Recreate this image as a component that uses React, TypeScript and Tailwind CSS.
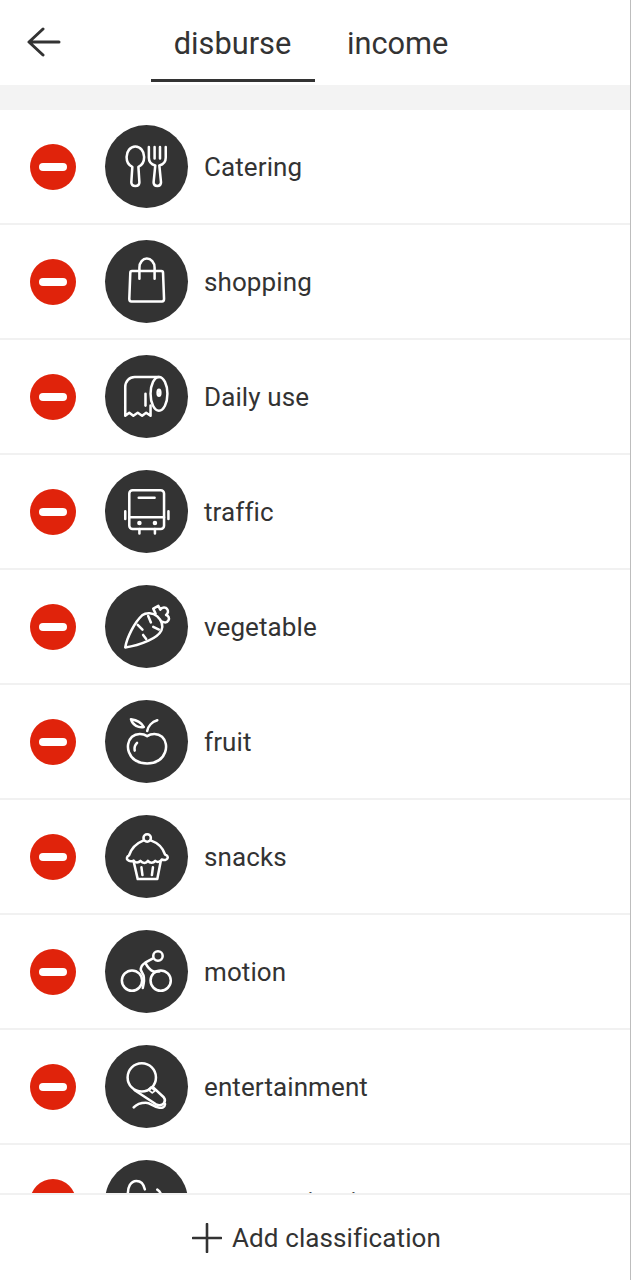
import React from "react";

const font = "font-['Roboto',sans-serif]";

const IconSvg = ({ children }: { children: React.ReactNode }) => (
  <svg
    viewBox="0 0 246 246"
    className="w-full h-full"
    fill="none"
    stroke="white"
    strokeWidth="7.5"
    strokeLinecap="round"
    strokeLinejoin="round"
  >
    {children}
  </svg>
);

const icons: Record<string, React.ReactNode> = {
  catering: (
    <>
      <path d="M90 64c-15 0-26 14-26 31 0 14 7 25 17 29l-3 46c0 7 5 11 12 11s12-4 12-11l-3-46c10-4 17-15 17-29 0-17-11-31-26-31z" />
      <path d="M130 65v32c0 12 8 20 19 23l-5 50c0 7 4 11 11 11s11-4 11-11l-5-50c11-3 19-11 19-23V65M147 65v34M163 65v34" />
    </>
  ),
  shopping: (
    <>
      <path d="M80 92h87c3 0 5 2 5 5l3 78c0 4-2 7-6 7H78c-4 0-6-3-6-7l3-78c0-3 2-5 5-5z" />
      <path d="M102 115V82c0-16 10-27 22-27s23 11 23 27v33" />
    </>
  ),
  daily: (
    <>
      <path d="M160 65H88c-16 0-28 13-28 30v85l12-9 12 9 13-9 13 9 12-9 13 9V150" />
      <ellipse cx="160" cy="115" rx="25" ry="50" />
      <ellipse cx="160" cy="112" rx="4" ry="9" />
      <path d="M120 115v35" />
    </>
  ),
  traffic: (
    <>
      <rect x="72" y="60" width="103" height="115" rx="10" />
      <path d="M100 82h47M72 140h103M60 122v23M188 122v23M102 175v13M148 175v13" />
      <circle cx="102" cy="157" r="3" fill="white" />
      <circle cx="148" cy="157" r="3" fill="white" />
    </>
  ),
  vegetable: (
    <>
      <path d="M60 185c5-30 28-75 50-95 13-10 32-8 45 3 13 12 18 28 12 42-6 12-20 22-38 30-20 9-45 17-69 20z" />
      <path d="M128 92l8 19M97 118l14 14M160 132l-17-8M122 160l-9-12" />
      <path d="M150 85l-7-15 15-8 6 11c5-8 16-8 20-2 5 6 3 13-3 18 7 2 11 9 7 16-3 5-9 7-14 5l-7-2" />
    </>
  ),
  fruit: (
    <>
      <path d="M125 107c-12-8-32-9-45 2-12 11-15 30-9 46 7 19 25 33 54 33 28 0 46-14 53-33 6-16 3-35-9-46-13-11-32-10-44-2z" />
      <path d="M88 150c-2-10 2-18 7-23" />
      <path d="M77 57c14 2 30 8 38 23-15 3-33-4-38-23z" />
      <path d="M125 92c2-14 14-27 30-32" />
    </>
  ),
  snacks: (
    <>
      <circle cx="125" cy="68" r="11" />
      <path d="M113 76c-20 8-36 26-42 44-6 3-8 9-4 13 4 4 12 5 18 2 5 8 15 7 20 1 7 8 17 8 22 0 6 7 16 7 22 0 6 5 15 4 19-4 7 3 15 1 17-3 3-5-1-10-7-12-6-18-21-34-41-41" />
      <path d="M85 138l12 52h58l10-52M108 155l3 23M142 155l-3 23" />
    </>
  ),
  motion: (
    <>
      <circle cx="80" cy="150" r="30" />
      <circle cx="165" cy="150" r="30" />
      <circle cx="157" cy="77" r="14" />
      <path d="M141 85l-22 12c-8 5-13 13-13 21l8 16c3 10 2 22-2 38" />
      <path d="M120 98c6 12 14 21 24 25h17" />
    </>
  ),
  entertainment: (
    <>
      <circle cx="109" cy="96" r="42" />
      <path d="M88 134l62 41c10 5 20 3 25-3 4-6 3-12-1-17l-32-30" />
      <path d="M128 132l8-7 12 11-8 6z" strokeWidth="5" />
      <path d="M85 185c8-9 20-14 36-14 14 0 22 13 40 15 8 1 16-1 17-11" />
    </>
  ),
  communication: (
    <>
      <path d="M68 104c-2-22 8-42 25-42 13 0 22 10 25 25" />
      <path d="M155 88c5 3 9 7 11 14" />
    </>
  ),
};

const rows = [
  { name: "Catering", icon: "catering" },
  { name: "shopping", icon: "shopping" },
  { name: "Daily use", icon: "daily" },
  { name: "traffic", icon: "traffic" },
  { name: "vegetable", icon: "vegetable" },
  { name: "fruit", icon: "fruit" },
  { name: "snacks", icon: "snacks" },
  { name: "motion", icon: "motion" },
  { name: "entertainment", icon: "entertainment" },
  { name: "communication", icon: "communication" },
];

const Row = ({ name, icon }: { name: string; icon: string }) => (
  <div className="flex items-center h-[115px] shrink-0 border-b-2 border-[#f1f1f1] pl-[30px]">
    <div className="w-[46px] h-[46px] rounded-full bg-[#e0230b] flex items-center justify-center">
      <div className="w-[28px] h-[8px] rounded-full bg-white" />
    </div>
    <div className="w-[83px] h-[83px] rounded-full bg-[#333333] ml-[29px] shrink-0">
      <IconSvg>{icons[icon]}</IconSvg>
    </div>
    <span className="ml-[16px] pt-[2px] text-[26px] text-[#333333] tracking-[0.1px]">
      {name}
    </span>
  </div>
);

export default function App() {
  return (
    <div
      className={`${font} w-[631px] h-[1280px] bg-white flex flex-col overflow-hidden border-r border-[#bdbdbd]`}
    >
      <header className="h-[85px] shrink-0 flex items-start">
        <div className="w-[151px] pl-[27px] pt-[26px]">
          <svg
            width="36"
            height="32"
            viewBox="0 0 36 32"
            fill="none"
            stroke="#333333"
            strokeWidth="3"
            strokeLinecap="round"
            strokeLinejoin="round"
          >
            <path d="M32 16H3M16 3L2 16l14 13" />
          </svg>
        </div>
        <div className="w-[164px] h-[82px] border-b-[3px] border-[#333333] flex justify-center pt-[24px] pr-[1px] text-[30.75px] leading-[40px] text-[#333333]">
          disburse
        </div>
        <div className="ml-[32px] pt-[24px] text-[30.75px] leading-[40px] text-[#333333]">
          income
        </div>
      </header>
      <div className="h-[25px] shrink-0 bg-[#f3f3f3]" />
      <div className="flex-1 min-h-0 overflow-hidden flex flex-col">
        {rows.map((r) => (
          <Row key={r.icon} name={r.name} icon={r.icon} />
        ))}
      </div>
      <footer className="h-[87px] shrink-0 bg-white border-t-2 border-[#f1f1f1] flex items-center justify-center gap-[10px] pl-[3px]">
        <svg
          width="30"
          height="30"
          viewBox="0 0 30 30"
          fill="none"
          stroke="#333333"
          strokeWidth="2.6"
          strokeLinecap="round"
        >
          <path d="M15 1V29M1 15H29" />
        </svg>
        <span className="pt-[2px] text-[26px] text-[#333333] tracking-[0.1px]">
          Add classification
        </span>
      </footer>
    </div>
  );
}
